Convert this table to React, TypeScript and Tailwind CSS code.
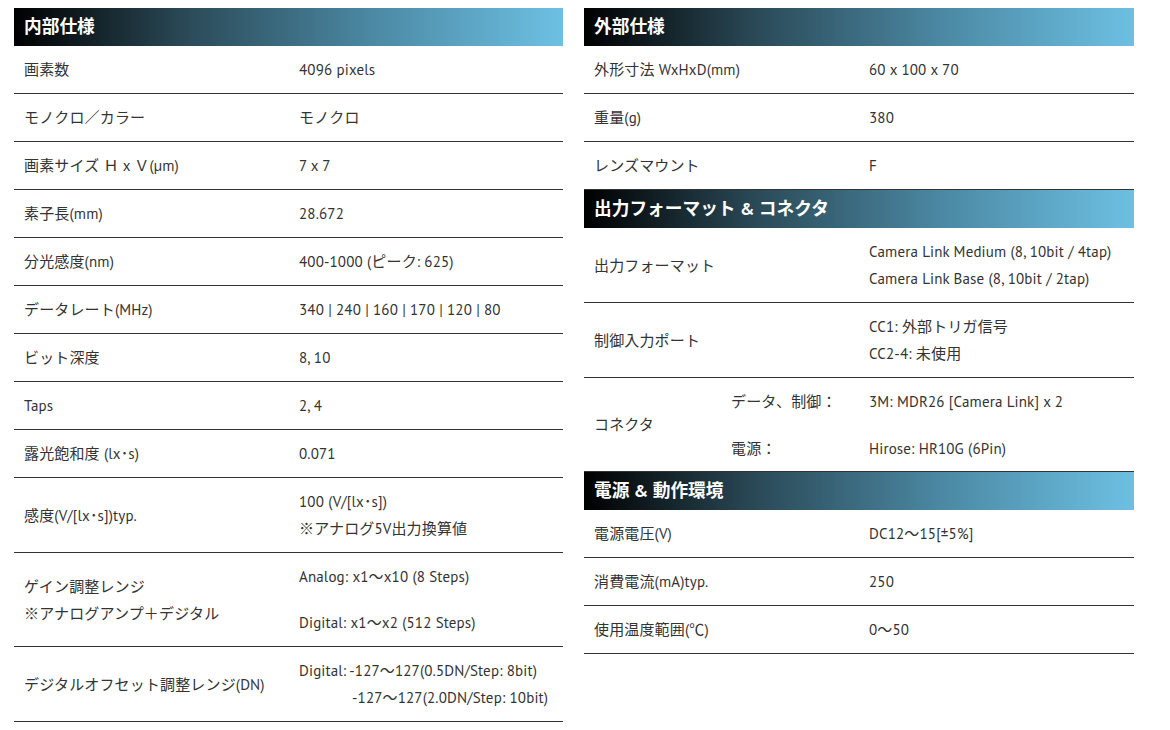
import React from "react";

type Row = { label: React.ReactNode; value: React.ReactNode };

const font = { fontFamily: '"PT Sans", "Liberation Sans Narrow", "Noto Sans CJK JP", sans-serif' };

const Header = ({ title }: { title: string }) => (
  <div className="h-[38px] flex items-center px-[10px] bg-[linear-gradient(to_right,#000_0%,#2b4b59_32%,#4c8aa5_66%,#6dc0e3_100%)]">
    <span className="text-white font-bold text-[17.7px]">{title}</span>
  </div>
);

const SpecRow = ({ label, value }: Row) => (
  <div className="flex items-center border-b border-[#333] py-[10px] min-h-[48px] leading-[27px] text-[15px] tracking-[0.15px] text-[#333]">
    <div className="w-[285px] pl-[10px] shrink-0">{label}</div>
    <div className="flex-1">{value}</div>
  </div>
);

const inner: Row[] = [
  { label: "画素数", value: "4096 pixels" },
  { label: "モノクロ／カラー", value: "モノクロ" },
  { label: "画素サイズ Ｈ x Ｖ(μm)", value: "7 x 7" },
  { label: "素子長(mm)", value: "28.672" },
  { label: "分光感度(nm)", value: "400-1000 (ピーク: 625)" },
  { label: "データレート(MHz)", value: "340 | 240 | 160 | 170 | 120 | 80" },
  { label: "ビット深度", value: "8, 10" },
  { label: "Taps", value: "2, 4" },
  { label: "露光飽和度 (lx･s)", value: "0.071" },
  {
    label: "感度(V/[lx･s])typ.",
    value: (
      <>
        <div>100 (V/[lx･s])</div>
        <div>※アナログ5V出力換算値</div>
      </>
    ),
  },
  {
    label: (
      <>
        <div>ゲイン調整レンジ</div>
        <div>※アナログアンプ＋デジタル</div>
      </>
    ),
    value: (
      <div className="flex flex-col gap-[19px]">
        <div>Analog: x1～x10 (8 Steps)</div>
        <div>Digital: x1～x2 (512 Steps)</div>
      </div>
    ),
  },
  {
    label: "デジタルオフセット調整レンジ(DN)",
    value: (
      <>
        <div>Digital: -127～127(0.5DN/Step: 8bit)</div>
        <div className="pl-[53px]">-127～127(2.0DN/Step: 10bit)</div>
      </>
    ),
  },
];

const outer: Row[] = [
  { label: "外形寸法 WxHxD(mm)", value: "60 x 100 x 70" },
  { label: "重量(g)", value: "380" },
  { label: "レンズマウント", value: "F" },
];

const output: Row[] = [
  {
    label: "出力フォーマット",
    value: (
      <>
        <div>Camera Link Medium (8, 10bit / 4tap)</div>
        <div>Camera Link Base (8, 10bit / 2tap)</div>
      </>
    ),
  },
  {
    label: "制御入力ポート",
    value: (
      <>
        <div>CC1: 外部トリガ信号</div>
        <div>CC2-4: 未使用</div>
      </>
    ),
  },
];

const power: Row[] = [
  { label: "電源電圧(V)", value: "DC12～15[±5%]" },
  { label: "消費電流(mA)typ.", value: "250" },
  { label: "使用温度範囲(℃)", value: "0～50" },
];

export default function App() {
  return (
    <div className="w-[1170px] h-[730px] bg-white overflow-hidden" style={font}>
      <div className="flex gap-[21px] pl-[14px] pt-[8px]">
        <div className="w-[549px]">
          <Header title="内部仕様" />
          {inner.map((r, i) => (
            <SpecRow key={i} {...r} />
          ))}
        </div>
        <div className="w-[550px]">
          <Header title="外部仕様" />
          {outer.map((r, i) => (
            <SpecRow key={i} {...r} />
          ))}
          <Header title="出力フォーマット & コネクタ" />
          {output.map((r, i) => (
            <SpecRow key={i} {...r} />
          ))}
          <div className="flex items-center border-b border-[#333] text-[15px] tracking-[0.15px] leading-[27px] text-[#333]">
            <div className="w-[147px] pl-[10px] shrink-0">コネクタ</div>
            <div className="flex-1">
              <div className="flex items-center h-[47px]">
                <div className="w-[138px] shrink-0">データ、制御：</div>
                <div>3M: MDR26 [Camera Link] x 2</div>
              </div>
              <div className="flex items-center h-[46px]">
                <div className="w-[138px] shrink-0">電源：</div>
                <div>Hirose: HR10G (6Pin)</div>
              </div>
            </div>
          </div>
          <Header title="電源 & 動作環境" />
          {power.map((r, i) => (
            <SpecRow key={i} {...r} />
          ))}
        </div>
      </div>
    </div>
  );
}
